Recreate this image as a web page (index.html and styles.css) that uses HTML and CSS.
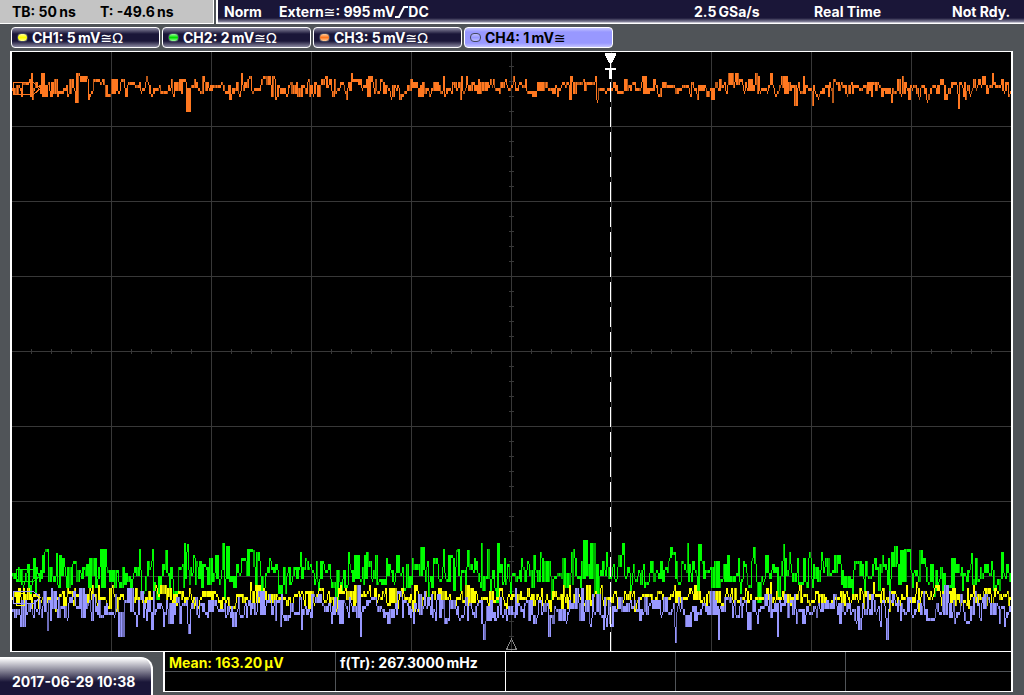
FILE: index.html
```
<!DOCTYPE html>
<html lang="en">
<head>
  <meta charset="UTF-8">
  <meta name="viewport" content="width=device-width, initial-scale=1.0">
  <title>Oscilloscope</title>
  <link rel="stylesheet" href="styles.css">
</head>
<body>
  <!-- Status bar: time base, trigger, acquisition -->
  <header class="status">
    <div class="timebase">
      <span class="tb">TB: 50&thinsp;ns</span>
      <span>T: -49.6&thinsp;ns</span>
    </div>
    <div class="trigger">
      <span class="mode">Norm</span>
      <span class="source">Extern<i class="coupling">≅</i>: 995&thinsp;mV<svg class="slope" viewBox="0 0 13 12"><path d="M0 11H4L9 1H13"/></svg>DC</span>
      <span class="rate">2.5&thinsp;GSa/s</span>
      <span class="acq">Real Time</span>
      <span class="state">Not Rdy.</span>
    </div>
  </header>

  <!-- Channel tabs -->
  <nav class="channels">
    <button class="channel ch1" type="button"><span class="led"></span>CH1: 5&thinsp;mV<i class="coupling">≅Ω</i></button>
    <button class="channel ch2" type="button"><span class="led"></span>CH2: 2&thinsp;mV<i class="coupling">≅Ω</i></button>
    <button class="channel ch3" type="button"><span class="led"></span>CH3: 5&thinsp;mV<i class="coupling">≅Ω</i></button>
    <button class="channel ch4 active" type="button"><span class="led"></span>CH4: 1&thinsp;mV<i class="coupling">≅</i></button>
  </nav>

  <!-- Waveform display -->
  <main class="display">
    <svg class="plot" viewBox="0 0 999 599" preserveAspectRatio="none">
      <path class="grid" id="grid"/>
      <path class="green" id="ch2"/>
      <path class="green dim" id="ch2dim"/>
      <path class="yellow" id="ch1"/>
      <path class="yellow dim" id="ch1dim"/>
      <path class="violet" id="ch4"/>
      <path class="violet dim" id="ch4dim"/>
      <path class="orange" id="ch3"/>
      <path class="orange dim" id="ch3dim"/>
      <!-- channel zero markers -->
      <path class="orange" d="M1.500 30.500H21.500L28.500 36.500L21.500 42.500H1.500Z"/>
      <path class="green" d="M4.500 517.500H21.500L28.500 523.500L21.500 529.500H4.500Z"/>
      <path class="yellow" d="M4.500 541.500H12.500V553.500H4.500Z"/>
      <path class="violet" d="M1.500 539.500H21.500L28.500 545.500L21.500 551.500H1.500Z"/>
      <!-- trigger position -->
      <path class="trigger-line" d="M598.500 5V599"/>
      <path class="trigger-mark" d="M593 1H604V3L600 11H597L593 3ZM593 16H604V18H600V27H597V18H593Z"/>
      <path class="reference" d="M499.500 587L494.500 597.500H504.500Z"/>
    </svg>
  </main>

  <footer class="bottom">
    <div class="clock">2017-06-29 10:38</div>
    <div class="measurements">
      <div class="cell mean">Mean: 163.20&thinsp;µV</div>
      <div class="cell split">f(Tr): 267.3000&thinsp;mHz</div>
      <div class="cell"></div>
      <div class="cell"></div>
      <div class="cell"></div>
      <div class="cell"></div>
      <div class="cell split"></div>
      <div class="cell"></div>
      <div class="cell"></div>
      <div class="cell"></div>
    </div>
  </footer>

  <script src="script.js"></script>
</body>
</html>
```
FILE: styles.css
```
* {
  box-sizing: border-box;
}
body {
  margin: 0;
  min-height: 100vh;
  display: flex;
  flex-direction: column;
  background-color: #505458;
  color: #fff;
  font: 700 14px/20px Inter, "Liberation Sans", sans-serif;
}
.coupling {
  font-family: "DejaVu Sans", sans-serif;
  font-style: normal;
  font-weight: normal;
  font-size: 14px;
  line-height: 16px;
}
/* Status bar */
.status {
  display: flex;
  gap: 2px;
  height: 24px;
}
.timebase {
  display: flex;
  width: 214px;
  padding: 2px 0 0 12px;
  background-color: #c4c4c4;
  border-right: 1px solid #fff;
  border-bottom: 1px solid #fff;
  color: #000;
}
.tb {
  width: 88px;
}
.trigger {
  flex: 1;
  display: flex;
  padding: 2px 8px 0 6px;
  background: linear-gradient(#1a1638 18px, #8a88a0 22px, #fff 23px);
  border-left: 2px solid #fff;
  white-space: nowrap;
}
.mode {
  width: 55px;
}
.source {
  flex: 1;
}
.slope {
  width: 13px;
  height: 12px;
  fill: none;
  stroke: #fff;
  stroke-width: 2;
  vertical-align: -1px;
}
.rate {
  width: 120px;
}
.acq {
  width: 138px;
}
.state {
  width: 64px;
}
/* Channel tabs */
.channels {
  display: flex;
  gap: 2px;
  padding: 3px 11px;
}
.channel {
  display: flex;
  align-items: center;
  width: 149px;
  height: 21px;
  padding: 0 5px;
  background: linear-gradient(#8a88a0, #1a1638 6px, #1a1638 13px, #8a88a0);
  border: 1px solid #fff;
  border-radius: 4px;
  color: #fff;
  font: inherit;
  white-space: nowrap;
}
.channel.active {
  background: linear-gradient(#c4c4ff, #9898ff 4px, #9898ff 15px, #c4c4ff);
  color: #000;
}
.led {
  width: 11px;
  height: 9px;
  margin-right: 4px;
  border: 1px solid #444860;
  border-radius: 4px;
}
.ch1 .led {
  background: linear-gradient(#ff9, #ff0 50%, #ff9);
}
.ch2 .led {
  background: linear-gradient(#9f9, #0d0 50%, #9f9);
}
.ch3 .led {
  background: linear-gradient(#fc9, #ff7820 50%, #fc9);
}
.ch4 .led {
  background: linear-gradient(#bbf, #9898ff 50%, #bbf);
}
/* Waveform display */
.display {
  flex: 1;
  display: flex;
  min-height: 0;
  margin: 0 11px 0 10px;
  background-color: #000;
  border: 1px solid #fff;
  border-width: 1px 2px;
}
.plot {
  width: 100%;
  height: 100%;
  fill: none;
  shape-rendering: crispEdges;
}
.grid {
  stroke: #383838;
}
.orange {
  stroke: #ff7820;
}
.green {
  stroke: #00ff00;
}
.yellow {
  stroke: #ffff00;
}
.violet {
  stroke: #9898ff;
}
.orange.dim {
  stroke: #b85818;
}
.green.dim {
  stroke: #00b000;
}
.yellow.dim {
  stroke: #c0c000;
}
.violet.dim {
  stroke: #6c6cb8;
}
.trigger-line {
  stroke: #fff;
  stroke-dasharray: 20 5;
}
.trigger-mark {
  fill: #fff;
}
.reference {
  stroke: #888;
}
/* Clock and measurement table */
.bottom {
  display: flex;
  height: 43px;
  padding-right: 11px;
}
.clock {
  width: 153px;
  margin: 5px 10px 0 0;
  padding: 14px 0 0 12px;
  background: linear-gradient(#fff, #1a1638 24px);
  border-right: 2px solid #fff;
  border-top: 1px solid #fff;
  border-radius: 0 12px 0 0;
  white-space: nowrap;
}
.measurements {
  flex: 1;
  display: grid;
  grid-template-columns: 171fr 170fr 170fr 170fr 165fr;
  grid-template-rows: 20px 19px;
  height: 40px;
  background-color: #000;
  border: solid #fff;
  border-width: 0 2px 1px;
}
.cell {
  padding: 1px 0 0 4px;
  border-right: 1px solid #505458;
  border-bottom: 1px solid #505458;
  white-space: nowrap;
}
.cell:nth-child(5n) {
  border-right: 0;
}
.cell:nth-child(n + 6) {
  border-bottom: 0;
}
.split {
  border-right-color: #fff;
}
.mean {
  color: #ff0;
}
```
FILE: script.js
```
// Graticule: 10 x 8 divisions with fine ticks on the centre axes
function drawGrid() {
  let d = '';
  for (let x = 99.5; x < 999; x += 100) d += `M${x} 0V599`;
  for (let y = 74.5; y < 599; y += 75) d += `M0 ${y}H999`;
  for (let x = 19.5; x < 999; x += 20) d += `M${x} 297V302`;
  for (let y = 14.5; y < 599; y += 15) d += `M497 ${y}H502`;
  document.getElementById('grid').setAttribute('d', d);
}

// One min/max column per pixel, levels on a 3px step like an 8 bit ADC.
// Some columns go to the dim path, where the trace was hit less often.
function drawTrace(id, seed, base, spread, peaks) {
  let s = seed;
  const rnd = () => (s = (s * 16807) % 2147483647) / 2147483647;
  const noise = () => (rnd() + rnd() + rnd() + rnd() - 2) * spread;
  let bright = '';
  let dim = '';
  let y = base;
  let top = base;
  let bottom = base + 3;
  for (let x = 0; x < 999; x++) {
    // a sample is often wider than one pixel, so its column repeats
    if (peaks[x] !== undefined || rnd() > 0.35) {
      let next = base + Math.round(noise() / 3) * 3;
      if (peaks[x] !== undefined) next = peaks[x];
      top = Math.min(y, next);
      bottom = Math.max(y, next, top + 3);
      y = next;
    }
    const column = `M${x + 0.5} ${top}V${bottom}`;
    if (rnd() < 0.2) dim += column;
    else bright += column;
  }
  document.getElementById(id).setAttribute('d', bright);
  document.getElementById(id + 'dim').setAttribute('d', dim);
}

drawGrid();
drawTrace('ch2', 71, 521, 20, {44: 501, 153: 498, 175: 492, 238: 498, 408: 495, 444: 498, 455: 498, 658: 495, 686: 492, 741: 495, 771: 492, 888: 498, 907: 498, 959: 501});
drawTrace('ch1', 33, 545, 10, {});
drawTrace('ch4', 57, 557, 15, {35: 579, 106: 585, 176: 582, 348: 585, 471: 588, 536: 585, 663: 591, 706: 588, 765: 585, 874: 588});
drawTrace('ch3', 19, 36, 10, {19: 21, 174: 60, 229: 21, 743: 21, 782: 54, 800: 54, 946: 57});
```
